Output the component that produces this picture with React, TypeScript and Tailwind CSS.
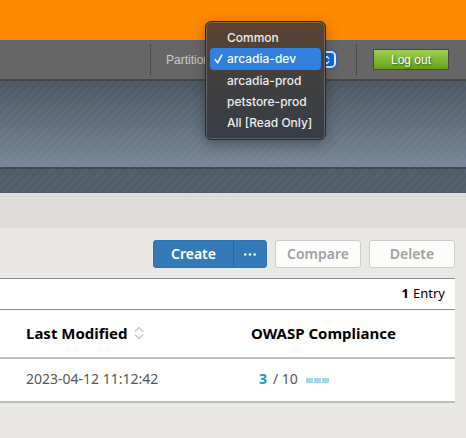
import React from "react";

const partitions = ["Common", "arcadia-dev", "arcadia-prod", "petstore-prod", "All [Read Only]"];
const selected = "arcadia-dev";

const stripes =
  "bg-[repeating-linear-gradient(135deg,rgba(255,255,255,0.025)_0px,rgba(255,255,255,0.025)_3px,transparent_3px,transparent_6px)]";

function PartitionMenu() {
  return (
    <div
      role="listbox"
      aria-label="Partition options"
      className="absolute -top-[30px] -left-4 z-10 h-[119px] w-[121px] rounded-md border border-[#2b2725] bg-linear-to-b from-[#5e4230] via-[#42403f] via-45% to-[#363c47] px-1 py-[5px] font-['Inter',sans-serif] text-xs font-medium text-[#eeeeee] shadow-[inset_0_0_0_1px_rgba(255,255,255,0.2),0_4px_14px_rgba(0,0,0,0.3)]"
    >
      {partitions.map((name) => (
        <button
          key={name}
          type="button"
          role="option"
          aria-selected={name === selected}
          className={
            name === selected
              ? "flex h-[22px] w-full items-center rounded bg-[#3080dd] pl-1 text-left whitespace-nowrap text-white"
              : "flex h-[21px] w-full items-center pl-1 text-left whitespace-nowrap"
          }
        >
          <span className="flex w-[13px] shrink-0">
            {name === selected && (
              <svg viewBox="0 0 10 10" className="h-[10px] w-[10px]" aria-hidden="true">
                <path d="M1.2 5.6 3.6 8.8 7.8 1.2" fill="none" stroke="currentColor" strokeWidth="1.5" strokeLinecap="round" strokeLinejoin="round" />
              </svg>
            )}
          </span>
          {name}
        </button>
      ))}
    </div>
  );
}

function TopBar() {
  return (
    <header>
      <div className="h-10 bg-[#ff8a00]" />
      <div className="flex h-[41px] items-center justify-end border-b-2 border-[#444746] bg-[#666666] pr-[17px] font-['Liberation_Sans',Arial,sans-serif]">
        <div className="flex h-[31px] items-center border-l border-dotted border-[#333333] pl-[15px]">
          <label htmlFor="partition" className="w-[55px] text-xs whitespace-nowrap text-[#cccccc]">
            Partition:
          </label>
          <div className="relative flex w-[115px] items-center">
            <select
              id="partition"
              defaultValue={selected}
              className="h-[17px] w-full appearance-none rounded-[5px] border-2 border-[#e8edf6] bg-[#666666] pl-2 text-xs text-transparent shadow-[0_0_0_2px_#3964ad]"
            >
              {partitions.map((name) => (
                <option key={name}>{name}</option>
              ))}
            </select>
            <span className="pointer-events-none absolute right-[2px] flex h-[13px] w-[14px] items-center justify-center rounded-[3px] bg-[#0a6ae8]">
              <svg viewBox="0 0 8 10" className="h-[10px] w-2" aria-hidden="true">
                <path d="M2 3.6 4 1.4 6 3.6M2 6.4 4 8.6 6 6.4" fill="none" stroke="white" strokeWidth="1.2" strokeLinecap="round" />
              </svg>
            </span>
            <PartitionMenu />
          </div>
          <div className="ml-5 h-[31px] border-l border-dotted border-[#333333]" />
        </div>
        <button
          type="button"
          className="ml-4 h-[21px] w-[76px] border border-[#424a3c] bg-linear-to-b from-[#9fcf52] to-[#64a30e] text-xs text-white [text-shadow:1px_1px_2px_rgba(0,0,0,0.5)]"
        >
          Log out
        </button>
      </div>
    </header>
  );
}

function Toolbar() {
  return (
    <div className="flex justify-end gap-2 text-sm font-semibold">
      <div className="flex h-7 w-[114px] overflow-hidden rounded-[3px] border border-[#2e74b3] bg-[#337ab7] text-white">
        <button type="button" className="flex-1 border-r border-[#2b6699]">
          Create
        </button>
        <button type="button" aria-label="More actions" className="flex w-8 items-center justify-center">
          <svg viewBox="0 0 12 3" className="h-[3px] w-3" fill="currentColor" aria-hidden="true">
            <circle cx="1.3" cy="1.5" r="1.2" />
            <circle cx="6" cy="1.5" r="1.2" />
            <circle cx="10.7" cy="1.5" r="1.2" />
          </svg>
        </button>
      </div>
      <button type="button" disabled className="h-7 w-[86px] rounded-[3px] border border-[#cccccc] bg-[#fcfcfb] text-[#a0a0a0]">
        Compare
      </button>
      <button type="button" disabled className="h-7 w-[86px] rounded-[3px] border border-[#cccccc] bg-[#fcfcfb] text-[#a0a0a0]">
        Delete
      </button>
    </div>
  );
}

function PolicyTable() {
  return (
    <section className="mt-[10px] border-t border-[#888888] bg-white">
      <p className="flex h-[30px] items-center justify-end gap-1 pr-[10px] text-[13px] text-black">
        <b>1</b> Entry
      </p>
      <table className="w-full table-fixed border-collapse text-left">
        <thead>
          <tr className="h-12 border-t border-b-2 border-t-[#888888] border-b-[#bdbdbd] text-[15px] text-black">
            <th className="w-[251px] pl-[26px] font-bold">
              <span className="flex items-center gap-[6px]">
                Last Modified
                <svg viewBox="0 0 10 14" className="h-[14px] w-[10px]" fill="none" stroke="#c8c8c8" strokeWidth="1.4" aria-hidden="true">
                  <path d="M1 5.5 5 1.5 9 5.5M1 8.5 5 12.5 9 8.5" />
                </svg>
              </span>
            </th>
            <th className="font-bold">OWASP Compliance</th>
          </tr>
        </thead>
        <tbody>
          <tr className="h-11 border-b-2 border-[#bdbdbd] text-sm text-[#555555]">
            <td className="pb-[2px] pl-[26px]">2023-04-12 11:12:42</td>
            <td className="pb-[2px] pl-2">
              <span className="flex items-center">
                <b className="text-[#1496d3]">3</b>
                <span className="ml-[6px]">/ 10</span>
                <span className="mt-1 ml-2 flex gap-px">
                  <span className="h-[5px] w-[7px] bg-[#a1d8ed]" />
                  <span className="h-[5px] w-[7px] bg-[#a1d8ed]" />
                  <span className="h-[5px] w-[7px] bg-[#a1d8ed]" />
                </span>
              </span>
            </td>
          </tr>
        </tbody>
      </table>
    </section>
  );
}

export default function App() {
  return (
    <div className="min-h-screen bg-[#e9e8e4] font-['Noto_Sans','Open_Sans',sans-serif]">
      <TopBar />
      <div className="bg-linear-to-b from-[#4b5763] to-[#778799]">
        <div className={"h-[86px] " + stripes} />
      </div>
      <div className="border-t-2 border-[#414a50] bg-[#505c69]">
        <div className={"h-6 " + stripes} />
      </div>
      <div className="h-[35px] bg-[#dddcd8]" />
      <main className="pt-3 pr-[11px]">
        <Toolbar />
        <PolicyTable />
      </main>
    </div>
  );
}
